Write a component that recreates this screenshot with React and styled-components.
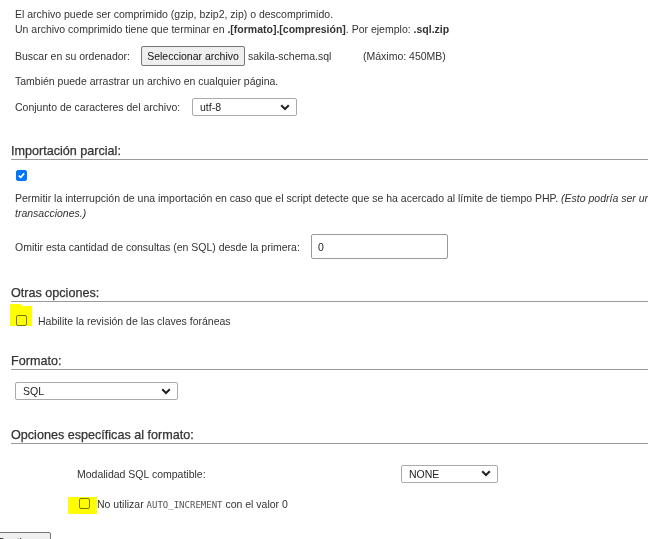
import styled, { createGlobalStyle } from "styled-components";

const GlobalStyle = createGlobalStyle`
  html, body {
    margin: 0;
    padding: 0;
    background: #fff;
    overflow: hidden;
  }
  body {
    font-family: "Liberation Sans", Arial, sans-serif;
    font-size: 10.5px;
    color: #333;
  }
`;

const Chevron = () => (
  <svg width="10" height="7" viewBox="0 0 10 7">
    <path d="M1.2 1.2 L5 5 L8.8 1.2" fill="none" stroke="#222" strokeWidth="2" />
  </svg>
);

const Check = () => (
  <svg width="9" height="9" viewBox="0 0 9 9">
    <path d="M1.8 4.6 L3.7 6.4 L7.2 2.4" fill="none" stroke="#fff" strokeWidth="1.6" />
  </svg>
);

const App = () => {
  return (
    <>
      <GlobalStyle />
      <Page>
        <Para>
          El archivo puede ser comprimido (gzip, bzip2, zip) o descomprimido.
          <br />
          Un archivo comprimido tiene que terminar en <b>.[formato].[compresión]</b>. Por
          ejemplo: <b>.sql.zip</b>
        </Para>

        <Row top={9} height={20}>
          <Label width={126}>Buscar en su ordenador:</Label>
          <FileButton>Seleccionar archivo</FileButton>
          <FileName>sakila-schema.sql</FileName>
          <span>(Máximo: 450MB)</span>
        </Row>

        <Para top={8}>También puede arrastrar un archivo en cualquier página.</Para>

        <Row top={9} height={18}>
          <Label width={177}>Conjunto de caracteres del archivo:</Label>
          <Select width={105} height={18}>
            <span>utf-8</span>
            <Chevron />
          </Select>
        </Row>

        <Heading top={27}>Importación parcial:</Heading>

        <Row top={10} height={11}>
          <Box checked>
            <Check />
          </Box>
        </Row>

        <Para top={10} nowrap>
          Permitir la interrupción de una importación en caso que el script detecte que se ha
          acercado al límite de tiempo PHP.{" "}
          <i>
            (Esto podría ser un buen método para importar archivos grandes, sin embargo puede
            romper las
            <br />
            transacciones.)
          </i>
        </Para>

        <Row top={13} height={25}>
          <Label width={296}>Omitir esta cantidad de consultas (en SQL) desde la primera:</Label>
          <TextInput>0</TextInput>
        </Row>

        <Heading top={26}>Otras opciones:</Heading>

        <Row top={13} height={11}>
          <Box />
          <CheckLabel gap={11}>Habilite la revisión de las claves foráneas</CheckLabel>
        </Row>

        <Heading top={27}>Formato:</Heading>

        <Row top={12} height={18}>
          <Select width={163} height={18}>
            <span>SQL</span>
            <Chevron />
          </Select>
        </Row>

        <Heading top={27}>Opciones específicas al formato:</Heading>

        <Options>
          <Row top={21} height={17} indent={62}>
            <Label width={324}>Modalidad SQL compatible:</Label>
            <Select width={97} height={18}>
              <span>NONE</span>
              <Chevron />
            </Select>
          </Row>
          <Row top={16} height={11} indent={63}>
            <Box />
            <CheckLabel gap={7}>
              No utilizar <Code>AUTO_INCREMENT</Code> con el valor 0
            </CheckLabel>
          </Row>
        </Options>

        <SubmitButton>Continuar</SubmitButton>

        <Marker
          style={{ left: 10, top: 304, width: 22, height: 22 }}
          shape="polygon(0 0, 50% 0, 55% 9%, 100% 9%, 100% 100%, 0 100%)"
        />
        <Marker style={{ left: 68, top: 497, width: 29, height: 17 }} />
      </Page>
    </>
  );
};

const Page = styled.div`
  position: relative;
  padding: 7px 0 0 11px;
  height: 539px;
  box-sizing: border-box;
`;

const Para = styled.div`
  margin-top: ${(p) => p.top || 0}px;
  padding-left: 4px;
  line-height: 15px;
  white-space: ${(p) => (p.nowrap ? "nowrap" : "normal")};

  b {
    font-weight: bold;
  }
`;

const Row = styled.div`
  display: flex;
  align-items: center;
  margin-top: ${(p) => p.top}px;
  height: ${(p) => p.height}px;
  padding-left: ${(p) => 4 + (p.indent || 0)}px;
  white-space: nowrap;
`;

const Label = styled.span`
  display: inline-block;
  width: ${(p) => p.width}px;
  flex-shrink: 0;
`;

const FileButton = styled.div`
  box-sizing: border-box;
  height: 20px;
  width: 104px;
  display: flex;
  align-items: center;
  justify-content: center;
  background: #efefef;
  border: 1px solid #767676;
  border-radius: 2px;
  color: #111;
`;

const FileName = styled.span`
  display: inline-block;
  width: 115px;
  margin-left: 3px;
`;

const Select = styled.div`
  box-sizing: border-box;
  width: ${(p) => p.width}px;
  height: ${(p) => p.height}px;
  display: flex;
  align-items: center;
  justify-content: space-between;
  padding: 0 6px 0 7px;
  border: 1px solid #aaa;
  border-radius: 2px;
  background: #fff;
  color: #222;
  flex-shrink: 0;
`;

const Heading = styled.div`
  margin-top: ${(p) => p.top}px;
  height: 16px;
  line-height: 16px;
  font-size: 12.6px;
  color: #333;
  -webkit-text-stroke: 0.25px #333;
  border-bottom: 1px solid #9a9a9a;
`;

const Box = styled.div`
  box-sizing: border-box;
  width: 11px;
  height: 11px;
  margin-left: 1px;
  border-radius: 2px;
  display: flex;
  align-items: center;
  justify-content: center;
  flex-shrink: 0;
  background: ${(p) => (p.checked ? "#0075ff" : "#fff")};
  border: 1px solid ${(p) => (p.checked ? "#0075ff" : "#767676")};
`;

const CheckLabel = styled.span`
  margin-left: ${(p) => p.gap}px;
`;

const Code = styled.span`
  font-family: "DejaVu Sans Mono", "Liberation Mono", monospace;
  font-size: 9px;
  color: #555;
`;

const TextInput = styled.div`
  box-sizing: border-box;
  width: 137px;
  height: 25px;
  display: flex;
  align-items: center;
  padding-left: 6px;
  border: 1px solid #999;
  border-radius: 2px;
  color: #222;
`;

const Options = styled.div``;

const SubmitButton = styled.div`
  margin-top: 23px;
  margin-left: -22px;
  width: 62px;
  height: 21px;
  box-sizing: border-box;
  padding-top: 3px;
  text-align: center;
  background: #efefef;
  border: 1px solid #767676;
  border-radius: 2px;
  color: #111;
`;

const Marker = styled.div`
  position: absolute;
  background: #ffff00;
  mix-blend-mode: multiply;
  clip-path: ${(p) => p.shape || "none"};
  pointer-events: none;
`;

export default App;
